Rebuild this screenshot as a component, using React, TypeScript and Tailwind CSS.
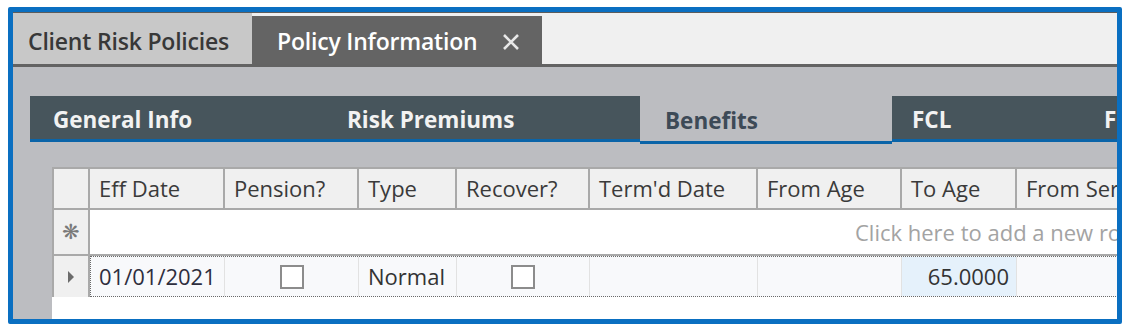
import React from 'react';

const font = { fontFamily: '"Open Sans", "Noto Sans", sans-serif' };

function Checkbox() {
  return <div className="w-[24px] h-[24px] border-2 border-[#8c8c8c] bg-white" />;
}

export default function App() {
  return (
    <div className="w-[1131px] h-[332px] bg-white pt-[7px] pl-[8px]" style={font}>
      <div className="w-[1114px] h-[317px] border-[5px] border-[#0a6fc1] rounded-[2px] overflow-hidden flex flex-col bg-[#bcbdc1]">
        {/* document tabs */}
        <div className="h-[55px] shrink-0 bg-[#f0f0f0] border-t border-[#5c5c5c] border-b-[3px] border-b-[#636363] flex items-end">
          <div className="h-[51px] w-[239px] bg-[#c8c8c8] flex items-center pl-[15px] pt-[6px] text-[23px] font-semibold text-[#383838] tracking-[-0.2px]">
            Client Risk Policies
          </div>
          <div className="h-[48px] w-[290px] bg-[#646464] flex items-center pl-[25px] pt-[3px] text-[23px] font-semibold text-white tracking-[-0.2px]">
            Policy Information
            <svg className="ml-[25px]" width="18" height="18" viewBox="0 0 18 18">
              <path d="M2 2 L16 16 M16 2 L2 16" stroke="#e8e8e8" strokeWidth="2.6" />
            </svg>
          </div>
        </div>

        {/* content */}
        <div className="flex-1 flex flex-col pt-[29px]">
          {/* section tabs */}
          <div className="ml-[17px] flex items-start h-[48px] shrink-0 text-[22.5px] font-bold">
            <div className="w-[294px] h-[46px] bg-[#47555c] border-b-[3px] border-[#0a64a8] text-[#f2f2f2] flex items-center pl-[23px] pt-[5px]">General Info</div>
            <div className="w-[316px] h-[46px] bg-[#47555c] border-b-[3px] border-[#0a64a8] text-[#f2f2f2] flex items-center pl-[23px] pt-[5px]">Risk Premiums</div>
            <div className="w-[252px] h-[48px] bg-[#bcbdc1] border-b-[3px] border-[#0a64a8] text-[#3d4a57] flex items-center pl-[25px] pt-[5px]">Benefits</div>
            <div className="w-[190px] h-[46px] bg-[#47555c] border-b-[3px] border-[#0a64a8] text-[#f2f2f2] flex items-center pl-[20px] pt-[5px]">FCL</div>
            <div className="flex-1 h-[46px] bg-[#47555c] border-b-[3px] border-[#0a64a8] text-[#f2f2f2] flex items-center pl-[22px] pt-[5px] whitespace-nowrap overflow-hidden">FCL Details</div>
          </div>

          {/* grid */}
          <div className="ml-[39px] mt-[23px] flex-1 bg-white text-[22px] text-[#333] whitespace-nowrap overflow-hidden">
            <div className="flex h-[43px] bg-[#f0f0f0] border-t-2 border-b-2 border-[#a9a9a9]">
              <div className="w-[38px] shrink-0 border-l-2 border-r-2 border-[#a9a9a9]" />
              {[
                ['Eff Date', 135],
                ['Pension?', 134],
                ['Type', 98],
                ['Recover?', 133],
                ["Term'd Date", 168],
                ['From Age', 144],
                ['To Age', 115],
                ['From Service', 160],
              ].map(([label, w]) => (
                <div
                  key={label as string}
                  className="shrink-0 border-r-2 border-[#a9a9a9] flex items-center pl-[9px] text-[#3a3a3a]"
                  style={{ width: w as number }}
                >
                  {label}
                </div>
              ))}
            </div>
            <div className="flex h-[46px] border-b-2 border-[#a9a9a9]">
              <div className="w-[38px] shrink-0 bg-[#f0f0f0] border-l-2 border-r-2 border-[#a9a9a9] flex items-center justify-center text-[21px] text-[#7a7a7a]">❋</div>
              <div className="flex-1 flex items-center pl-[765px] text-[#a3a3a3]">Click here to add a new row</div>
            </div>
            <div className="flex h-[41px]">
              <div className="w-[38px] shrink-0 bg-[#f0f0f0] border-l-2 border-r-2 border-[#a9a9a9] flex items-center justify-center">
                <svg width="8" height="12" viewBox="0 0 8 12"><path d="M1 0 L7 6 L1 12 Z" fill="#6b6b6b" /></svg>
              </div>
              <div className="flex flex-1 border border-dotted border-[#6a6a6a] bg-[#f8f9fb]">
                <div className="w-[134px] shrink-0 border-r border-[#e2e2e2] flex items-center pl-[8px] text-[#2e2e3e]">01/01/2021</div>
                <div className="w-[134px] shrink-0 border-r border-[#e2e2e2] flex items-center justify-center"><Checkbox /></div>
                <div className="w-[98px] shrink-0 border-r border-[#e2e2e2] flex items-center pl-[9px]">Normal</div>
                <div className="w-[133px] shrink-0 border-r border-[#e2e2e2] flex items-center justify-center"><Checkbox /></div>
                <div className="w-[168px] shrink-0 border-r border-[#e2e2e2]" />
                <div className="w-[144px] shrink-0 border-r border-[#e2e2e2]" />
                <div className="w-[115px] shrink-0 border-r border-[#e2e2e2] bg-[#e5f1fb] flex items-center justify-end pr-[7px]">65.0000</div>
                <div className="w-[160px] shrink-0" />
              </div>
            </div>
          </div>
        </div>
      </div>
    </div>
  );
}
